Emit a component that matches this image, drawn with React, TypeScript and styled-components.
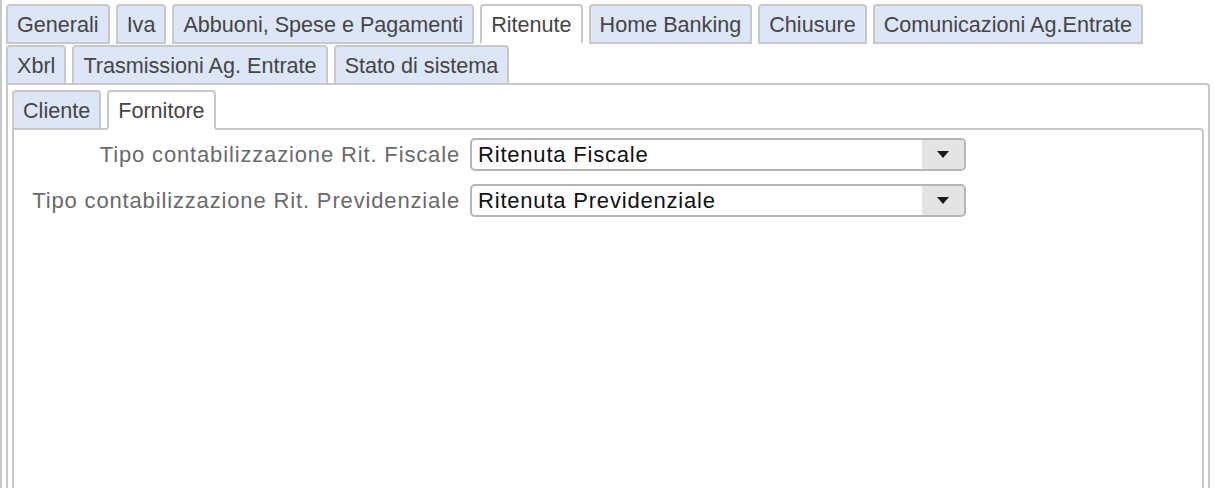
import React from "react";
import styled, { createGlobalStyle } from "styled-components";

const BORDER = "#c8c8c8";

const GlobalStyle = createGlobalStyle`
  html, body {
    margin: 0;
    padding: 0;
    background: #ffffff;
    overflow: hidden;
  }
  body {
    font-family: "Liberation Sans", Arial, Helvetica, sans-serif;
  }
`;

const Frame = styled.div`
  width: 1230px;
  box-sizing: border-box;
  border-left: 2px solid ${BORDER};
  border-right: 2px solid ${BORDER};
  padding: 4px 0 0 4px;
`;

const TabsWidget = styled.div<{ $width?: number }>`
  display: flex;
  flex-direction: column;
  width: ${(p) => (p.$width ? `${p.$width}px` : "auto")};
`;

const TabStrip = styled.div`
  margin: 0 0 -2px 0;
  display: flex;
  flex-direction: column;
  row-gap: 1px;
  position: relative;
  z-index: 1;
`;

const TabRow = styled.ul`
  list-style: none;
  margin: 0;
  padding: 0;
  display: flex;
  column-gap: 6px;
`;

const Tab = styled.li<{ $active?: boolean }>`
  height: 40px;
  box-sizing: border-box;
  padding: 1px 9px 0;
  border: 2px solid ${BORDER};
  border-bottom-color: ${(p) => (p.$active ? "#ffffff" : BORDER)};
  border-radius: 4px 4px 0 0;
  background: ${(p) => (p.$active ? "#ffffff" : "#dce6f7")};
  color: #454545;
  font-size: 21.6px;
  line-height: 35px;
  white-space: nowrap;
  cursor: pointer;
`;

const Panel = styled.div<{ $inner?: boolean }>`
  border: 2px solid ${BORDER};
  border-radius: 0 4px 0 0;
  padding: ${(p) => (p.$inner ? "8px 0 0 0" : "5px 4px 4px 4px")};
  min-height: ${(p) => (p.$inner ? "420px" : "0")};
  background: #ffffff;
`;

const Form = styled.div`
  display: grid;
  grid-template-columns: 446px 496px;
  column-gap: 10px;
  row-gap: 13px;
  align-items: center;
`;

const FieldLabel = styled.label`
  text-align: right;
  font-size: 22px;
  letter-spacing: 0.85px;
  color: #6a6a6a;
  white-space: nowrap;
`;

const Select = styled.div`
  height: 33px;
  box-sizing: border-box;
  border: 2px solid #b5b5b5;
  border-radius: 5px;
  display: flex;
  align-items: stretch;
  overflow: hidden;
  cursor: pointer;
`;

const SelectValue = styled.span`
  flex: 1;
  padding-left: 6px;
  font-size: 22px;
  letter-spacing: 0.8px;
  line-height: 29px;
  color: #111111;
  white-space: nowrap;
`;

const SelectButton = styled.span`
  width: 42px;
  background: #e4e4e4;
  display: flex;
  align-items: center;
  justify-content: center;
`;

const Caret = () => (
  <svg width="12" height="7" viewBox="0 0 12 7" aria-hidden="true">
    <polygon points="0,0 12,0 6,7" fill="#1a1a1a" />
  </svg>
);

const outerTabRows = [
  [
    "Generali",
    "Iva",
    "Abbuoni, Spese e Pagamenti",
    "Ritenute",
    "Home Banking",
    "Chiusure",
    "Comunicazioni Ag.Entrate",
  ],
  ["Xbrl", "Trasmissioni Ag. Entrate", "Stato di sistema"],
];

const innerTabRows = [["Cliente", "Fornitore"]];

const fields = [
  { label: "Tipo contabilizzazione Rit. Fiscale", value: "Ritenuta Fiscale" },
  { label: "Tipo contabilizzazione Rit. Previdenziale", value: "Ritenuta Previdenziale" },
];

const Tabs = ({ rows, active }: { rows: string[][]; active: string }) => (
  <TabStrip>
    {rows.map((row, i) => (
      <TabRow key={i}>
        {row.map((t) => (
          <Tab key={t} $active={t === active}>
            {t}
          </Tab>
        ))}
      </TabRow>
    ))}
  </TabStrip>
);

export default function App() {
  return (
    <>
      <GlobalStyle />
      <Frame>
        <TabsWidget $width={1204}>
          <Tabs rows={outerTabRows} active="Ritenute" />
          <Panel>
            <TabsWidget>
              <Tabs rows={innerTabRows} active="Fornitore" />
              <Panel $inner>
                <Form>
                  {fields.map((f) => (
                    <React.Fragment key={f.label}>
                      <FieldLabel>{f.label}</FieldLabel>
                      <Select>
                        <SelectValue>{f.value}</SelectValue>
                        <SelectButton>
                          <Caret />
                        </SelectButton>
                      </Select>
                    </React.Fragment>
                  ))}
                </Form>
              </Panel>
            </TabsWidget>
          </Panel>
        </TabsWidget>
      </Frame>
    </>
  );
}
